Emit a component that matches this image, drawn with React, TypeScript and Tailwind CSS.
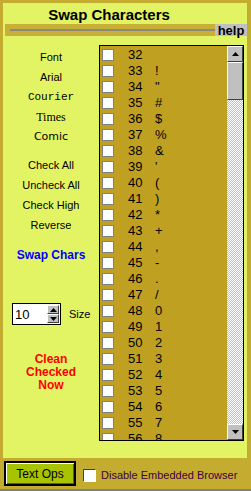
const CHARS = Array.from({ length: 25 }, (_, i) => 32 + i);

function Checkbox() {
  return <span className="block h-[12px] w-[12px] border border-[#808080] bg-white" />;
}

function Arrow({ up }: { up?: boolean }) {
  return (
    <span className="flex h-[16px] w-[16px] items-center justify-center border border-t-white border-l-white border-r-[#404040] border-b-[#404040] bg-[#c0c0c0]">
      <svg width="7" height="4" viewBox="0 0 7 4">
        <path d={up ? "M3.5 0L7 4H0z" : "M0 0h7L3.5 4z"} fill="#000" />
      </svg>
    </span>
  );
}

const label = "flex h-[20px] items-center justify-center text-[11px] text-black";

export default function App() {
  return (
    <div className="flex h-[491px] w-[251px] flex-col bg-[#c4ac30] font-['Liberation_Sans',Arial,sans-serif]">
      <div className="mx-[3px] mt-[3px] flex h-[455px] w-[244px] flex-col bg-[#e2f464]">
        {/* titulo + barra help */}
        <div className="flex h-[21px] w-[212px] items-end justify-center pb-[2px] text-[15px] font-bold leading-none text-black">
          Swap Characters
        </div>
        <div className="ml-[2px] flex h-[12px] items-center">
          <div className="flex h-full w-[210px] items-center bg-[#c8b038] pl-[5px]">
            <div className="h-[2px] w-full bg-[#8a8a7a]" />
          </div>
          <div className="flex h-full w-[32px] items-center justify-center bg-[#c0c0c0] text-[13px] font-bold leading-none text-black">
            help
          </div>
        </div>

        <div className="mt-[9px] flex">
          {/* columna izquierda */}
          <div className="flex w-[96px] flex-col">
            <div className="h-[2px]" />
            <div className={label}>Font</div>
            <div className={label}>Arial</div>
            <div className={`${label} font-['Liberation_Mono',monospace]`}>Courier</div>
            <div className={`${label} font-['Liberation_Serif',serif] text-[12px]`}>Times</div>
            <div className={`${label} font-['DejaVu_Sans',sans-serif]`}>Comic</div>
            <div className="h-[8px]" />
            <div className={label}>Check All</div>
            <div className={label}>Uncheck All</div>
            <div className={label}>Check High</div>
            <div className={label}>Reverse</div>
            <div className="h-[10px]" />
            <div className="flex h-[20px] items-center justify-center text-[12px] font-bold text-[#0000ff]">
              Swap Chars
            </div>
            <div className="h-[38px]" />
            <div className="flex items-center pl-[9px]">
              <div className="flex h-[22px] w-[49px] items-center justify-between border border-black bg-white pl-[2px] pr-[1px]">
                <span className="text-[13px] leading-none text-black">10</span>
                <div className="flex flex-col">
                  <span className="flex h-[9px] w-[12px] items-center justify-center border border-t-white border-l-white border-r-[#404040] border-b-[#404040] bg-[#c0c0c0]">
                    <svg width="7" height="4" viewBox="0 0 7 4"><path d="M3.5 0L7 4H0z" fill="#000" /></svg>
                  </span>
                  <span className="flex h-[9px] w-[12px] items-center justify-center border border-t-white border-l-white border-r-[#404040] border-b-[#404040] bg-[#c0c0c0]">
                    <svg width="7" height="4" viewBox="0 0 7 4"><path d="M0 0h7L3.5 4z" fill="#000" /></svg>
                  </span>
                </div>
              </div>
              <span className="ml-[8px] text-[11px] text-black">Size</span>
            </div>
            <div className="mt-[28px] flex flex-col items-center text-[12px] font-bold leading-[13px] text-[#ff0000]">
              <span className="block h-[13px]">Clean</span>
              <span className="block h-[13px]">Checked</span>
              <span className="block h-[13px]">Now</span>
            </div>
          </div>

          {/* lista */}
          <div className="flex h-[396px] w-[145px] border border-black bg-[#c0a020]">
            <div className="flex flex-1 flex-col overflow-hidden">
              {CHARS.map((c) => (
                <div key={c} className="flex h-[16px] shrink-0 items-center pt-[1px]">
                  <span className="ml-[2px]"><Checkbox /></span>
                  <span className="ml-[14px] w-[27px] text-[13px] leading-none text-black">{c}</span>
                  <span className="text-[13px] leading-none text-black">{c === 32 ? "" : String.fromCharCode(c)}</span>
                </div>
              ))}
            </div>
            <div className="flex w-[16px] flex-col bg-[repeating-conic-gradient(#ffffff_0%_25%,#c0c0c0_0%_50%)] bg-[length:2px_2px]">
              <Arrow up />
              <div className="h-[38px] w-[16px] border border-t-white border-l-white border-r-[#404040] border-b-[#404040] bg-[#c0c0c0]" />
              <div className="flex-1" />
              <Arrow />
            </div>
          </div>
        </div>
      </div>

      {/* barra inferior */}
      <div className="flex flex-1 items-start pl-[4px] pt-[3px]">
        <div className="flex h-[25px] w-[72px] items-center justify-center border-2 border-black bg-[#a8c400] shadow-[inset_1px_1px_0_#ffffff,inset_-1px_-1px_0_#606000] text-[12px] text-black">
          Text Ops
        </div>
        <div className="ml-[7px] mt-[6px] flex items-center">
          <span className="block h-[13px] w-[13px] border border-b-white border-r-white border-t-[#404040] border-l-[#404040] bg-white" />
          <span className="ml-[5px] text-[11px] text-[#400040]">Disable Embedded Browser</span>
        </div>
      </div>
      <div className="h-[2px] bg-[#808080]" />
    </div>
  );
}
